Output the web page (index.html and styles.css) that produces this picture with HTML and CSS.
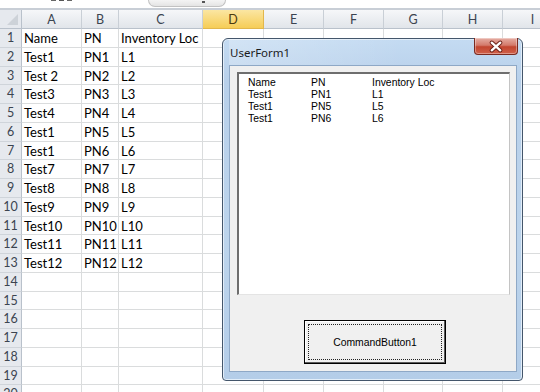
FILE: index.html
```html
<!DOCTYPE html>
<html lang="en">
<head>
  <meta charset="UTF-8" />
  <title>UserForm1</title>
  <link rel="stylesheet" href="styles.css">
</head>
<body>

  <div class="excel">
    <div class="topEdge">
      <span class="nameBits"></span>
      <span class="formulaTab"><span class="tabArrow"></span></span>
    </div>

    <div class="sheet" id="sheet"></div>

    <div class="userform">
      <div class="titlebar"><span class="title">UserForm1</span></div>
      <button class="closeBtn" aria-label="Close">
        <svg width="44" height="17" viewBox="0 0 44 17">
          <path d="M17.5 4.5 L26.5 12.5 M26.5 4.5 L17.5 12.5" stroke="#6b2118" stroke-width="4.4" stroke-linecap="round" fill="none"/>
          <path d="M17.5 4.5 L26.5 12.5 M26.5 4.5 L17.5 12.5" stroke="#ffffff" stroke-width="2.4" stroke-linecap="round" fill="none"/>
        </svg>
      </button>
      <div class="client">
        <div class="listbox">
          <div class="lrow"><span>Name</span><span>PN</span><span>Inventory Loc</span></div>
          <div class="lrow"><span>Test1</span><span>PN1</span><span>L1</span></div>
          <div class="lrow"><span>Test1</span><span>PN5</span><span>L5</span></div>
          <div class="lrow"><span>Test1</span><span>PN6</span><span>L6</span></div>
        </div>
        <div class="btnRow">
          <button class="cmdBtn"><span class="focusRect">CommandButton1</span></button>
        </div>
      </div>
    </div>
  </div>

  <script>
    const rows = [
      ["Name", "PN", "Inventory Loc"],
      ["Test1", "PN1", "L1"],
      ["Test 2", "PN2", "L2"],
      ["Test3", "PN3", "L3"],
      ["Test4", "PN4", "L4"],
      ["Test1", "PN5", "L5"],
      ["Test1", "PN6", "L6"],
      ["Test7", "PN7", "L7"],
      ["Test8", "PN8", "L8"],
      ["Test9", "PN9", "L9"],
      ["Test10", "PN10", "L10"],
      ["Test11", "PN11", "L11"],
      ["Test12", "PN12", "L12"]
    ];
    const letters = "ABCDEFGHI".split("");
    const sheet = document.getElementById("sheet");

    function cell(cls, text) {
      const div = document.createElement("div");
      div.className = cls;
      div.textContent = text || "";
      sheet.appendChild(div);
    }

    cell("corner", "");
    letters.forEach(l => cell(l === "D" ? "colHead active" : "colHead", l));

    for (let r = 1; r <= 20; r++) {
      cell("rowHead", r);
      const data = rows[r - 1] || [];
      letters.forEach((l, i) => cell("cell", data[i]));
    }
  </script>
</body>
</html>
```

FILE: styles.css
```css
body {
  margin: 0;
  background: #ffffff;
  overflow: hidden;
}
.excel {
  position: relative;
  width: 540px;
  height: 392px;
  overflow: hidden;
  font-family: "Lato", "Liberation Sans", sans-serif;
}

/* bottom edge of the formula bar */
.topEdge {
  height: 8px;
  border-bottom: 2px solid #c8ced6;
  display: flex;
  align-items: flex-start;
  background: #fff;
}
.nameBits {
  margin-left: 51px;
  width: 21px;
  height: 1px;
  background: linear-gradient(90deg, #666 0 5px, transparent 5px 8px, #555 8px 13px, transparent 13px 16px, #666 16px);
}
.formulaTab {
  margin-left: 76px;
  width: 76px;
  height: 6px;
  background: linear-gradient(#f4f4f4, #e4e4e4);
  border: 1px solid #c2c2c2;
  border-top: none;
  border-radius: 0 0 7px 7px;
  display: flex;
  justify-content: flex-end;
}
.tabArrow {
  width: 3px;
  height: 2px;
  margin: 1px 20px 0 0;
  background: #555;
}

/* worksheet */
.sheet {
  display: grid;
  grid-template-columns: 22px 60px 37px 84px 61px 60px 60px 59px 60px 60px;
  grid-template-rows: 19px;
  grid-auto-rows: 18.75px;
  width: 563px;
}
.sheet > div {
  box-sizing: border-box;
  border-right: 1px solid #dadcdd;
  border-bottom: 1px solid #dadcdd;
  overflow: hidden;
  white-space: nowrap;
}
.corner {
  position: relative;
  background: #e6e9ee;
  border-right-color: #b9c1cb !important;
  border-bottom-color: #b9c1cb !important;
}
.corner::after {
  content: "";
  position: absolute;
  right: 3px;
  bottom: 3px;
  border-left: 11px solid transparent;
  border-bottom: 11px solid #cdd2d8;
}
.colHead {
  background: linear-gradient(#f6f7f9, #e1e5ea);
  border-right-color: #c9cfd6 !important;
  border-bottom-color: #b9c1cb !important;
  color: #3b4450;
  font-size: 12.5px;
  line-height: 19px;
  text-align: center;
}
.colHead.active {
  background: linear-gradient(#fbe6a2, #f6cd57);
  border-right-color: #e2b74c !important;
  border-bottom-color: #e2b74c !important;
  color: #4a3a10;
}
.rowHead {
  background: #e6e9ee;
  border-right-color: #b9c1cb !important;
  border-bottom-color: #cfd4da !important;
  color: #3b4450;
  font-size: 12.5px;
  line-height: 18px;
  text-align: center;
}
.cell {
  background: #fff;
  color: #000;
  font-size: 13px;
  line-height: 19px;
  padding-left: 2px;
}

/* the VBA user form */
.userform {
  position: absolute;
  left: 222px;
  top: 38px;
  width: 301px;
  height: 343px;
  box-sizing: border-box;
  border: 1px solid #44566b;
  border-radius: 6px 6px 4px 4px;
  background: linear-gradient(#c4dbf2, #b8d0ea 12%, #bcd4ec 60%, #b4cde8);
  box-shadow: inset 0 0 0 1px #e3eef9;
  padding: 0 5px 8px 6px;
  display: flex;
  flex-direction: column;
}
.titlebar {
  height: 26px;
  display: flex;
  align-items: center;
  padding-left: 1px;
  background: linear-gradient(90deg, rgba(255,255,255,0.25), rgba(255,255,255,0) 60%);
}
.title {
  font-family: "Noto Sans", "Liberation Sans", sans-serif;
  font-size: 11.5px;
  color: #1b1b1b;
}
.closeBtn {
  position: absolute;
  left: 251px;
  top: -1px;
  width: 44px;
  height: 17px;
  padding: 0;
  border: 1px solid #7a2a20;
  border-top: none;
  border-radius: 0 0 4px 4px;
  background: linear-gradient(#e6aea4, #d47a6b 45%, #c2452f 55%, #d0614b);
  box-shadow: inset 0 0 0 1px rgba(255,255,255,0.35);
  display: flex;
}
.client {
  flex: 1;
  background: #f0f0f0;
  border: 1px solid #8ea8c6;
  padding: 6px 0 0 7px;
}
.listbox {
  width: 273px;
  height: 223px;
  box-sizing: border-box;
  background: #fff;
  border-top: 2px solid #6e6e6e;
  border-left: 2px solid #6e6e6e;
  border-right: 1px solid #c4c4c4;
  border-bottom: 1px solid #e4e4e4;
  padding: 3px 0 0 9px;
  font-family: "Liberation Sans", Arial, sans-serif;
  font-size: 10.4px;
  color: #000;
}
.lrow {
  display: grid;
  grid-template-columns: 63px 61px auto;
  line-height: 12px;
}
.btnRow {
  padding: 25px 0 0 67px;
}
.cmdBtn {
  width: 142px;
  height: 44px;
  box-sizing: border-box;
  padding: 3px;
  background: #f0f0f0;
  border: 1px solid #000;
  box-shadow: inset -1px -1px 0 #5a5a5a, inset 1px 1px 0 #ffffff;
  display: flex;
}
.focusRect {
  flex: 1;
  border: 1px dotted #222;
  display: flex;
  align-items: center;
  justify-content: center;
  font-family: "Liberation Sans", Arial, sans-serif;
  font-size: 10.4px;
  color: #000;
}
```
